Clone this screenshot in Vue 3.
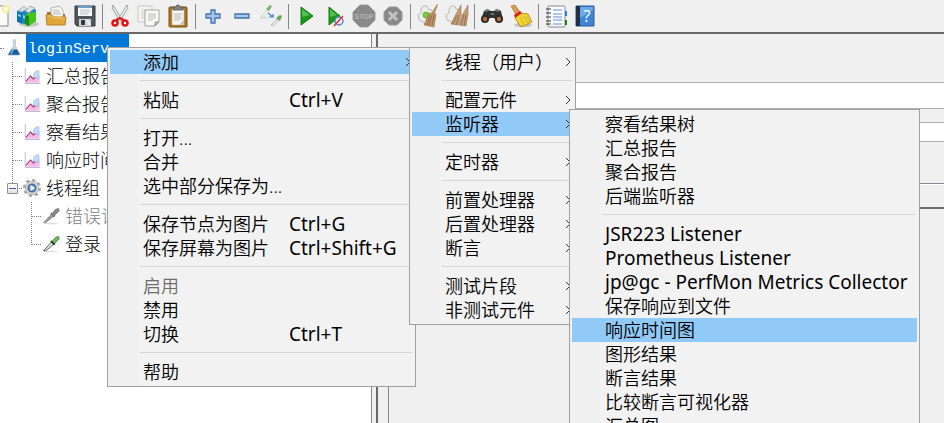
<script setup>
import { ref } from "vue";

const icons = {
  blank: `<path d="M4 2h13l5 5v15H4z" fill="#fafaf7" stroke="#8a8a86"/><circle cx="20" cy="5" r="4" fill="#f3ec9b"/><circle cx="20" cy="5" r="2" fill="#fffde0"/>`,
  templates: `<ellipse cx="14" cy="20" rx="10" ry="3" fill="#9a9a9a" opacity=".5"/><path d="M2 7l7-4 3 3 4-4 5 4v11l-8 4-11-3z" fill="#1685c9"/><path d="M3 7l6-5 3 3-5 3zM10 7l5-5 5 2-6 5z" fill="#d9dfe2" stroke="#8c989e" stroke-width=".6"/><path d="M2 8l5 2v10l-5-3z" fill="#0b6fb0"/><path d="M3 10l3 1v2l-3-1zM8 11l3 1v3l-3-1z" fill="#8ed0f4"/><path d="M10 11l4-2 7-1v9l-8 5-3-2z" fill="#4cc51b"/><path d="M10 11l4 1v10l-4-2z" fill="#1d8a0a"/><path d="M14 12l7-4v9l-7 5z" fill="#45c41c"/>`,
  open: `<path d="M3 8h4l2 2h12v5H3z" fill="#a9741a"/><path d="M7 4l8-2 4 4v9H7z" fill="#fbfbfa" stroke="#9e9e9b" stroke-width=".8"/><path d="M9 6h6M9 8h7M9 10h8" stroke="#b5b5b3"/><path d="M3 21l-1-10h6l2 2h12l-1 8H4z" fill="#dea73b" stroke="#b9811e"/><path d="M3 12h5l2 2h11" fill="none" stroke="#f4cc76"/>`,
  save: `<path d="M2 2h20v20H4l-2-2z" fill="#50555b" stroke="#363a3e"/><path d="M5 2h14v10H5z" fill="#f5f7f8"/><path d="M5 2h14v2H5z" fill="#6a9ecb"/><path d="M7 6h10M7 8h10M7 10h8" stroke="#bcc2c6"/><path d="M6 15h12v7H6z" fill="#d5d8da"/><path d="M8 16h4v5H8z" fill="#34383c"/><path d="M14 16l3 5" stroke="#fff"/>`,
  cut: `<path d="M5 1l9 15-2 1L4 4z" fill="#e9eaeb" stroke="#868a8c" stroke-width=".8"/><path d="M19 1l-9 15 2 1 8-13z" fill="#f6f6f6" stroke="#868a8c" stroke-width=".8"/><circle cx="7" cy="19" r="2.5" fill="none" stroke="#dc1717" stroke-width="2.5"/><circle cx="17" cy="19" r="2.5" fill="none" stroke="#dc1717" stroke-width="2.5"/><path d="M8 16l4-2 4 2" fill="none" stroke="#d41519" stroke-width="2"/>`,
  copy: `<path d="M1 2h14v16H1z" fill="#f4f4f3" stroke="#c6c6c5"/><path d="M4 6h8M4 8h5M4 10h4M4 12h4M4 14h4" stroke="#cfcfce"/><path d="M8 6h14v12l-4 4H8z" fill="#fafafa" stroke="#a2a29f"/><path d="M11 10h8M11 12h8M11 14h8M11 16h5" stroke="#b8b8b6"/><path d="M18 22v-4h4z" fill="#c8c8c5" stroke="#92928f"/>`,
  paste: `<rect x="3" y="3" width="18" height="20" rx="1" fill="#b47619" stroke="#79500f"/><path d="M6 5h12v16H6z" fill="#f8f8f7" stroke="#a8a8a4" stroke-width=".6"/><path d="M8 10h8M8 12h7M8 14h8M8 16h6" stroke="#b7b7b5"/><path d="M13 21l5-6v6z" fill="#c9c9c5"/><path d="M7 6V3h3l1-2h2l1 2h3v3z" fill="#85877f" stroke="#555750" stroke-width=".8"/>`,
  plus: `<path d="M10 6h4v4h5v4h-5v5h-4v-5H5v-4h5z" fill="#a5c6ec" stroke="#4472b0" stroke-width="1.3"/>`,
  minus: `<path d="M5 10h14v4H5z" fill="#a5c6ec" stroke="#4472b0" stroke-width="1.3"/>`,
  toggle: `<path d="M2 13l6-7 2 1-6 7z" fill="#f4f6f3" stroke="#b1b8b0" stroke-width=".6"/><path d="M7 5l4-4 2 1-3 5z" fill="#7bae70"/><path d="M1 14h8l-2-1" fill="none" stroke="#d0d5d3"/><path d="M9 9l5 4m0-3v3h-4" fill="none" stroke="#3a80dc" stroke-width="1.2"/><path d="M12 21l6-6 2 1-6 6z" fill="#eef0ed" stroke="#8f968e" stroke-width=".6"/><path d="M17 14l4-3 2 1-2 5z" fill="#68a45c"/>`,
  start: `<path d="M7 3l12 9-12 9z" fill="#169a16" stroke="#0c7c0c"/><path d="M8 5l8 6-8 2z" fill="#56bd50"/>`,
  startNow: `<path d="M6 3l11 9-11 9z" fill="#169a16" stroke="#0c7c0c"/><path d="M7 5l7 6-7 2z" fill="#56bd50"/><circle cx="16" cy="17" r="4" fill="#dfe9f8" stroke="#5585c4" stroke-width="1.4"/><path d="M11 22l9-10" stroke="#e03020" stroke-width="1.4"/>`,
  stop: `<path d="M8 1h8l7 7v8l-7 7H8l-7-7V8z" fill="#898989" stroke="#9a9a9a"/><text x="12" y="15" text-anchor="middle" font-family="Liberation Sans, sans-serif" font-size="7" font-weight="bold" fill="#b4b4b4">STOP</text>`,
  shutdown: `<path d="M8 3h8l5 5v8l-5 5H8l-5-5V8z" fill="#898989" stroke="#9a9a9a"/><path d="M8 8l8 8M16 8l-8 8" stroke="#c3c3c3" stroke-width="3"/>`,
  clear: `<path d="M7 2h4l1 3 4 1v4l3 2-3 4-2 3-5 1-3-3-3-1-1-5 3-2v-4z" fill="#eceeec" stroke="#b8bdb8"/><circle cx="10" cy="11" r="3" fill="#76cf36" stroke="#6aae4b"/><path d="M21 0l-6 10 3 1 4-10z" fill="#b98a5c"/><path d="M13 9l7 1-2 13-10-2z" fill="#be9468" stroke="#94703f" stroke-width=".6"/><path d="M14 11l-3 10M16 11l-3 10M18 11l-2 10" stroke="#7d583a" stroke-width=".6"/>`,
  clearAll: `<path d="M6 2h4l1 3 4 1v4l3 2-3 4-2 3-5 1-3-3-3-1-1-5 3-2v-4z" fill="#eceeec" stroke="#b8bdb8"/><path d="M16 1l-5 9-5 10 7 1 3-10zM23 1l-5 9-4 11 7 1 2-12z" fill="#c29e76" stroke="#98724a" stroke-width=".6"/><path d="M12 11L8 20M14 11l-3 10M19 10l-3 11M21 11l-2 11" stroke="#7d583a" stroke-width=".6"/>`,
  search: `<path d="M4 7l3-2 4 2h3l3-2 4 2 2 9-5 2-4-4h-4l-4 4-5-2z" fill="#303331"/><path d="M5 7l4-1M15 6l4 1M11 10h3" stroke="#868b88" stroke-width="1.5"/><circle cx="5" cy="15" r="4" fill="#292a29"/><circle cx="19" cy="15" r="4" fill="#292a29"/><circle cx="5" cy="15" r="2.2" fill="#b96b3c"/><circle cx="19" cy="15" r="2.2" fill="#b96b3c"/>`,
  broom: `<ellipse cx="14" cy="21" rx="9" ry="2" fill="#777" opacity=".4"/><path d="M2 2l4-1 5 7-4 3z" fill="#d79d58" stroke="#9c6a30" stroke-width=".6"/><path d="M11 9l8 1 4 8-11 5-6-9z" fill="#f3d435" stroke="#a98210" stroke-width=".8"/><path d="M11 13l4 8M14 12l5 7M17 12l4 6" stroke="#d3b02a"/><path d="M5 11l6-4 2 2-7 5z" fill="#d92222"/>`,
  list: `<rect x="4" y="2" width="17" height="21" rx="1" fill="#fafcff" stroke="#8a8a8a"/><path d="M21 7h2v5h-2z" fill="#2686e1"/><path d="M21 16h2v5h-2z" fill="#178816"/><path d="M9 6h9M9 10h9M9 13h9M9 16h9M9 20h9" stroke="#5c8fd8"/><path d="M2 5h5M2 9h5M2 13h5M2 17h5M2 20h5" stroke="#333" stroke-width="1.2"/>`,
  help: `<path d="M3 2h18v20H3z" fill="#3f86d8" stroke="#285890"/><path d="M3 2h4v20H3z" fill="#202f42"/><path d="M7 3h13v3L7 14z" fill="#6aa8e8"/><text x="14" y="18" text-anchor="middle" font-family="Open Sans, sans-serif" font-size="17" fill="#fff">?</text>`,
  flask: `<ellipse cx="11" cy="21" rx="9" ry="2" fill="#999" opacity=".3"/><path d="M11 1h3v8l6 12H4l7-12z" fill="#c9d8e4" stroke="#a0aeb9" stroke-width=".7"/><path d="M9 14h7l4 7H4z" fill="#195da0"/><path d="M11 14l-3 6" stroke="#79b4e2" stroke-width="2"/>`,
  graph: `<path d="M3 1v21h20" fill="none" stroke="#b5b5c0" stroke-width="1.2"/><path d="M4 19l6-7 4 4 8-6v11H4z" fill="#f2b9eb"/><path d="M4 19l6-7 4 4 3-3" fill="none" stroke="#a53366" stroke-width="1.5"/><path d="M14 13c0-6 3-8 7-8v11z" fill="#c3dafa" stroke="#8eb6ea"/>`,
  gear: `<circle cx="12" cy="12" r="10" fill="none" stroke="#a0a5a9" stroke-width="4" stroke-dasharray="4 3.85"/><circle cx="12" cy="12" r="9" fill="#d4d7da" stroke="#a3a8ac"/><circle cx="12" cy="12" r="5" fill="#7b9fcd" stroke="#416895" stroke-width="2"/><path d="M10 8l6 4-6 4z" fill="#f3f8ff"/>`,
  dropper: `<ellipse cx="12" cy="22" rx="10" ry="1" fill="#aaa" opacity=".4"/><path d="M2 21L13 9l3 3L5 21z" fill="#e5e9e5" stroke="#4c534f" stroke-width="1.2"/><path d="M12 8l5 5" stroke="#252d26" stroke-width="2.5"/><path d="M14 8l4-5 4-1 1 3-6 6z" fill="#6dbb57" stroke="#3e813b"/>`,
  dropperOff: `<ellipse cx="12" cy="22" rx="10" ry="1" fill="#aaa" opacity=".4"/><path d="M2 21L13 9l3 3L5 21z" fill="#999" stroke="#888"/><path d="M12 8l5 5" stroke="#777" stroke-width="2.5"/><path d="M14 8l4-5 4-1 1 3-6 6z" fill="#888" stroke="#777"/>`,
};

const toolGroups = [
  [["blank", "新建"], ["templates", "模板"], ["open", "打开"], ["save", "保存"]],
  [["cut", "剪切"], ["copy", "复制"], ["paste", "粘贴"]],
  [["plus", "展开"], ["minus", "收起"], ["toggle", "切换"]],
  [["start", "启动"], ["startNow", "不停顿启动"], ["stop", "停止"], ["shutdown", "关闭"]],
  [["clear", "清除"], ["clearAll", "清除全部"]],
  [["search", "搜索"], ["broom", "重置搜索"]],
  [["list", "函数助手"], ["help", "帮助"]],
];

const tree = [
  { label: "loginServ", icon: "flask", level: 0, selected: true },
  { label: "汇总报告", icon: "graph", level: 1 },
  { label: "聚合报告", icon: "graph", level: 1 },
  { label: "察看结果树", icon: "graph", level: 1 },
  { label: "响应时间图", icon: "graph", level: 1 },
  { label: "线程组", icon: "gear", level: 1, open: true },
  { label: "错误请求", icon: "dropperOff", level: 2, disabled: true },
  { label: "登录", icon: "dropper", level: 2 },
];

// null is a separator
const menus = [
  {
    name: "main",
    items: [
      { label: "添加", sub: true, active: true },
      null,
      { label: "粘贴", keys: "Ctrl+V" },
      null,
      { label: "打开..." },
      { label: "合并" },
      { label: "选中部分保存为..." },
      null,
      { label: "保存节点为图片", keys: "Ctrl+G" },
      { label: "保存屏幕为图片", keys: "Ctrl+Shift+G" },
      null,
      { label: "启用", disabled: true },
      { label: "禁用" },
      { label: "切换", keys: "Ctrl+T" },
      null,
      { label: "帮助" },
    ],
  },
  {
    name: "add",
    items: [
      { label: "线程（用户）", sub: true },
      null,
      { label: "配置元件", sub: true },
      { label: "监听器", sub: true, active: true },
      null,
      { label: "定时器", sub: true },
      null,
      { label: "前置处理器", sub: true },
      { label: "后置处理器", sub: true },
      { label: "断言", sub: true },
      null,
      { label: "测试片段", sub: true },
      { label: "非测试元件", sub: true },
    ],
  },
  {
    name: "listener",
    items: [
      { label: "察看结果树" },
      { label: "汇总报告" },
      { label: "聚合报告" },
      { label: "后端监听器" },
      null,
      { label: "JSR223 Listener", latin: true },
      { label: "Prometheus Listener", latin: true },
      { label: "jp@gc - PerfMon Metrics Collector", latin: true },
      { label: "保存响应到文件" },
      { label: "响应时间图", active: true },
      { label: "图形结果" },
      { label: "断言结果" },
      { label: "比较断言可视化器" },
      { label: "汇总图" },
    ],
  },
];

const planName = ref("");
const comment = ref("");
</script>

<template>
  <div class="window">
    <header class="toolbar">
      <div v-for="(group, i) in toolGroups" :key="i" class="group">
        <button v-for="[icon, title] in group" :key="icon" class="tool" type="button" :aria-label="title">
          <svg viewBox="0 0 24 24" v-html="icons[icon]"></svg>
        </button>
      </div>
    </header>

    <main class="workspace">
      <ul class="tree">
        <li
          v-for="node in tree"
          :key="node.label"
          :class="['node', 'level-' + node.level, { selected: node.selected, disabled: node.disabled }]"
        >
          <button v-if="node.open" class="toggle" type="button" aria-label="收起"></button>
          <svg class="node-icon" viewBox="0 0 24 24" v-html="icons[node.icon]"></svg>
          <span class="node-label">{{ node.label }}</span>
        </li>
      </ul>
      <section class="editor">
        <div class="form">
          <input v-model="planName" class="field name" type="text" aria-label="名称" />
          <input v-model="comment" class="field" type="text" aria-label="注释" />
        </div>
        <div class="strip"></div>
        <div class="content"></div>
      </section>
    </main>

    <ul v-for="menu in menus" :key="menu.name" :class="['menu', menu.name]">
      <li v-for="(item, i) in menu.items" :key="i">
        <hr v-if="!item" />
        <button v-else type="button" :class="['item', { active: item.active }]" :disabled="item.disabled">
          <span :class="['text', { latin: item.latin }]">{{ item.label }}</span>
          <span v-if="item.keys" class="keys latin">{{ item.keys }}</span>
          <svg v-if="item.sub" class="arrow" viewBox="0 0 6 10">
            <path d="M1 1l4 4-4 4" />
          </svg>
        </button>
      </li>
    </ul>
  </div>
</template>

<style>
body {
  margin: 0;
  overflow: hidden;
}
</style>

<style scoped>
.window {
  position: relative;
  display: flex;
  flex-direction: column;
  height: 100vh;
  overflow: hidden;
  background: #f0f0f0;
  font-family: "Noto Sans", "Noto Sans CJK SC", sans-serif;
  font-size: 18px;
  color: #000;
}

ul {
  margin: 0;
  padding: 0;
  list-style: none;
}

button {
  padding: 0;
  border: none;
  background: none;
  font: inherit;
  color: inherit;
}

.toolbar {
  display: flex;
  flex: none;
  align-items: center;
  height: 32px;
  margin-left: -17px;
  border-bottom: 2px solid #696969;
}

.group {
  display: flex;
}

.group + .group::before {
  content: "";
  width: 1px;
  height: 25px;
  margin: 0 2px 0 3px;
  background: #858585;
}

.tool {
  display: flex;
  align-items: center;
  justify-content: center;
  width: 29px;
  height: 25px;
}

.tool svg {
  width: 24px;
  height: 24px;
}

.workspace {
  display: flex;
  flex: 1;
  min-height: 0;
}

.tree {
  flex: none;
  width: 371px;
  background: #fff;
  border-right: 1px solid #828790;
  font-family: "Liberation Mono", "Noto Sans CJK SC", monospace;
  font-weight: 300;
}

.node {
  position: relative;
  display: flex;
  align-items: center;
  gap: 3px;
  height: 28px;
  padding-left: 5px;
  white-space: nowrap;
}

.level-1 {
  padding-left: 23px;
}

.level-2 {
  padding-left: 42px;
}

.node::before {
  content: "";
  position: absolute;
  top: -14px;
  left: 12px;
  width: 9px;
  height: 28px;
  border: 1px dotted #808080;
  border-width: 0 0 1px 1px;
}

.level-0::before {
  left: 0;
  width: 4px;
  border-left: none;
}

.level-2::before {
  left: 31px;
}

.level-0 + .level-1::before,
.level-1 + .level-2::before {
  top: 0;
  height: 14px;
}

.toggle {
  position: absolute;
  top: 9px;
  left: 7px;
  width: 11px;
  height: 11px;
  border: 1px solid #919191;
  border-radius: 1px;
  background: linear-gradient(#3c5f9e, #3c5f9e) center / 7px 1px no-repeat, linear-gradient(#fff, #e2e2e2);
}

.node-icon {
  flex: none;
  width: 18px;
  height: 18px;
}

.node-label {
  height: 26px;
  padding: 2px 2px 0;
  line-height: 28px;
}

.selected .node-label {
  min-width: 99px;
  background: #0078d7;
  color: #fff;
  font-size: 15px;
}

.disabled {
  color: #808080;
}

.editor {
  display: flex;
  flex: 1;
  flex-direction: column;
  min-width: 0;
  margin-left: 4px;
  border-left: 2px solid #696969;
}

.form {
  display: flex;
  flex-direction: column;
  gap: 13px;
  padding: 48px 0 41px 96px;
  border-bottom: 1px solid #828790;
}

.field {
  box-sizing: border-box;
  height: 20px;
  padding: 0 4px;
  border: 1px solid #abadb3;
  border-right: none;
  background: #fff;
}

.name {
  height: 27px;
}

.strip {
  height: 22px;
  border-top: 1px solid #fff;
  border-bottom: 2px solid #696969;
}

.content {
  flex: 1;
  margin-left: 10px;
  border-left: 1px solid #828790;
}

.menu {
  position: absolute;
  padding: 2px;
  border: 1px solid #a0a0a0;
  background: linear-gradient(90deg, #f0f0f0 30px, #f2f2f2 30px);
}

.main {
  top: 47px;
  left: 107px;
  width: 303px;
}

.add {
  top: 47px;
  left: 409px;
  width: 161px;
}

.listener {
  top: 109px;
  left: 569px;
  width: 345px;
}

.menu hr {
  height: 1px;
  margin: 0 1px 0 30px;
  border: none;
  background: #d7d7d7;
}

.menu li:has(hr) {
  padding: 6px 0 7px;
}

.item {
  display: flex;
  align-items: center;
  width: 100%;
  height: 24px;
  padding: 0 2px 0 33px;
  font-weight: 350;
  line-height: 24px;
  text-align: left;
  white-space: nowrap;
}

.item.active {
  background: #91c9f7;
}

.item:disabled {
  color: #6d6d6d;
}

.text {
  flex: 1;
}

.keys {
  flex: none;
  width: 122px;
}

.latin {
  font-size: 19px;
  font-weight: 400;
}

.arrow {
  width: 6px;
  height: 10px;
  fill: none;
  stroke: #333;
}
</style>
